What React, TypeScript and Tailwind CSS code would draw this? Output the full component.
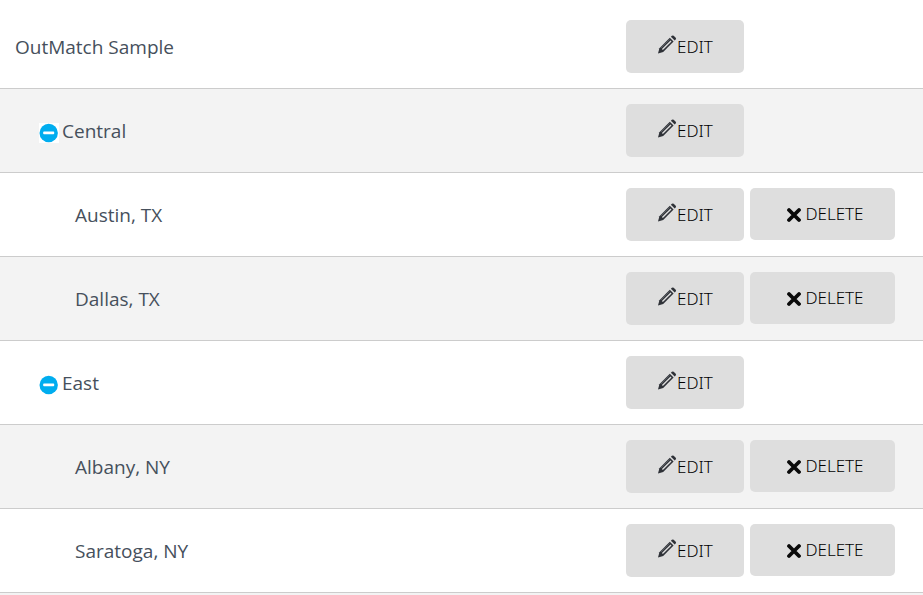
import React from 'react';
import clsx from 'clsx';

interface LocationNode {
  id: number;
  name: string;
  level: 0 | 1 | 2;
}

const locations: LocationNode[] = [
  { id: 1, name: 'OutMatch Sample', level: 0 },
  { id: 2, name: 'Central', level: 1 },
  { id: 3, name: 'Austin, TX', level: 2 },
  { id: 4, name: 'Dallas, TX', level: 2 },
  { id: 5, name: 'East', level: 1 },
  { id: 6, name: 'Albany, NY', level: 2 },
  { id: 7, name: 'Saratoga, NY', level: 2 },
];

const indent = ['pl-[15px]', 'pl-[39px]', 'pl-[75px]'];

const PencilIcon = () => (
  <svg viewBox="0 0 20 20" className="w-5 h-5 shrink-0 mb-1" aria-hidden="true">
    <path d="M1 18.4l1.4-5.2L12.8 2.8l3.8 3.8L6.2 17z" fill="#2f3238" />
    <path d="M5.4 14.6L14 6" stroke="#dedede" strokeWidth="1.4" fill="none" />
    <path d="M4 13l8.6-8.6" stroke="#75787c" strokeWidth="0.6" fill="none" />
    <path d="M13.9 1.8l1-1q.9-.8 1.8 0l2 2q.8.9 0 1.8l-1 1z" fill="#2f3238" />
  </svg>
);

const CrossIcon = () => (
  <svg viewBox="0 0 20 16" className="w-5 h-4 mt-[2px] shrink-0" aria-hidden="true">
    <path d="M8 3l10 10M18 3L8 13" stroke="#0a0a0a" strokeWidth="3.8" strokeLinecap="round" />
  </svg>
);

const CollapseIcon = () => (
  <svg viewBox="0 0 20 20" className="w-5 h-5 bg-white" aria-hidden="true">
    <circle cx="9.7" cy="10" r="9.2" fill="#00adef" />
    <rect x="4.2" y="8.6" width="11" height="2.6" rx="0.8" fill="#fff" />
  </svg>
);

const Row: React.FC<{ node: LocationNode }> = ({ node }) => (
  <tr className="border-b border-[#cccccc] even:bg-[#f3f3f3]">
    <td className={clsx('py-[15px]', indent[node.level])}>
      <div className="flex items-center">
        {node.level === 1 && (
          <button type="button" aria-label={`Collapse ${node.name}`} className="mr-[3px] mt-1">
            <CollapseIcon />
          </button>
        )}
        <span>{node.name}</span>
      </div>
    </td>
    <td className="w-[297px] py-[15px]">
      <div className="flex items-start gap-[6px] text-black font-['Noto_Sans',sans-serif] text-[17px] leading-[26px] font-light">
        <button type="button" className="flex items-center justify-center w-[118px] h-[53px] rounded-[5px] bg-[#dedede]">
          <PencilIcon />
          EDIT
        </button>
        {node.level === 2 && (
          <button type="button" className="flex items-center justify-center gap-1 w-[145px] h-[52px] rounded-[5px] bg-[#dedede]">
            <CrossIcon />
            DELETE
          </button>
        )}
      </div>
    </td>
  </tr>
);

export default function App() {
  return (
    <div className="min-h-screen bg-[linear-gradient(#fff_5px,#f3f3f3_5px)] pt-[5px] font-['Open_Sans',sans-serif] text-[19px] leading-[26px] text-[#46505c]">
      <table className="w-full border-collapse bg-white">
        <tbody>
          {locations.map((node) => (
            <Row key={node.id} node={node} />
          ))}
        </tbody>
      </table>
    </div>
  );
}
